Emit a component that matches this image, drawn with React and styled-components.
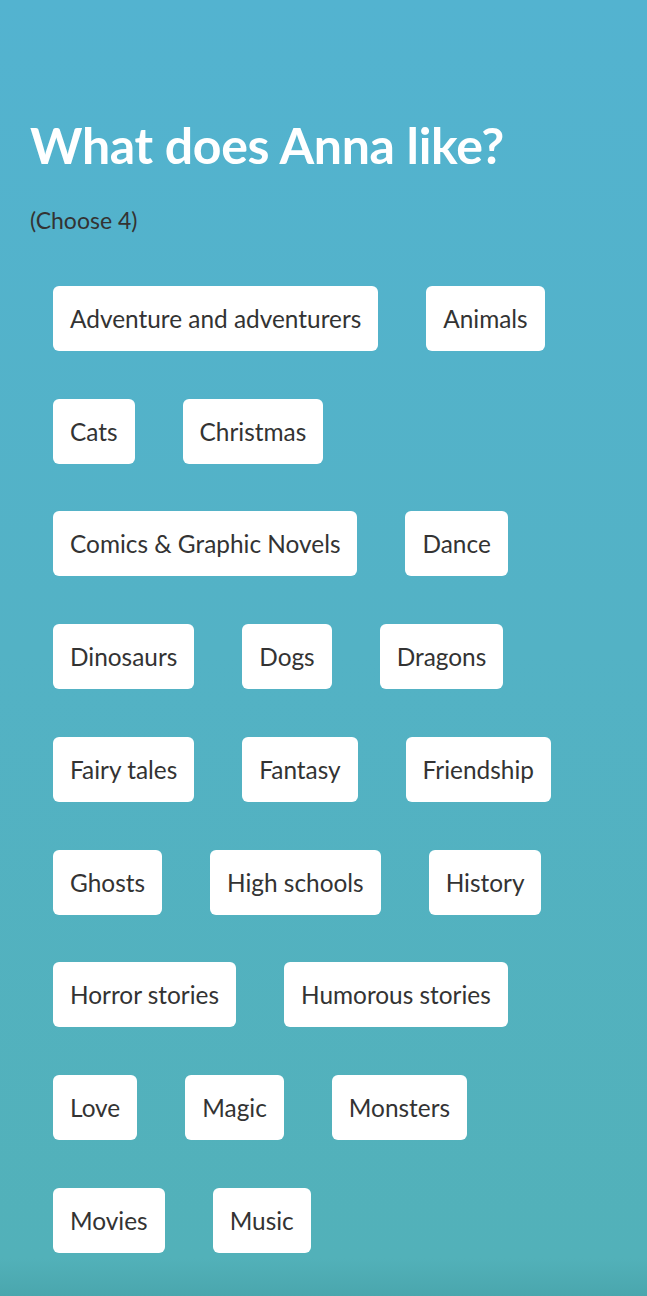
import React, { useState } from 'react';
import styled, { createGlobalStyle } from 'styled-components';

const GlobalStyle = createGlobalStyle`
    html, body {
        margin: 0;
        padding: 0;
    }
    body {
        font-family: Lato, "Liberation Sans", sans-serif;
        background: #52b2c6;
    }
`;

const interests = [
    'Adventure and adventurers', 'Animals', 'Cats', 'Christmas',
    'Comics & Graphic Novels', 'Dance', 'Dinosaurs', 'Dogs', 'Dragons',
    'Fairy tales', 'Fantasy', 'Friendship', 'Ghosts', 'High schools',
    'History', 'Horror stories', 'Humorous stories', 'Love', 'Magic',
    'Monsters', 'Movies', 'Music'
];

//#region STYLES
const StyledPage = styled.main`
    min-height: 100vh;
    box-sizing: border-box;
    padding: 115px 30px 20px 30px;
    background: linear-gradient(180deg, #53b3d0 0%, #53b2c5 50%, #52b1b9 97%, #4aa6ad 100%);
`;

const StyledTitle = styled.h1`
    margin: 0;
    color: #fff;
    font-size: 50px;
    font-weight: 700;
    line-height: 60px;
    letter-spacing: -0.3px;
`;

const StyledHint = styled.p`
    margin: 31px 0 0 0;
    color: #333;
    font-size: 23px;
    line-height: 28px;
`;

const StyledList = styled.ul`
    list-style: none;
    margin: 0;
    padding: 28px 0 0 0;
    margin-left: -1px;
    display: flex;
    flex-wrap: wrap;
`;

const StyledChip = styled.li`
    margin: 23.875px 24px;
    height: 65px;
    padding: 0 17px;
    display: flex;
    align-items: center;
    box-sizing: border-box;
    background-color: ${props => props.selected ? '#ffd95a' : '#fff'};
    border-radius: 6px;
    color: #333;
    font-size: 24.4px;
    cursor: pointer;
`;
//#endregion

function App () {
    const [picked, setPicked] = useState([]);

    const toggle = (name) => {
        setPicked(picked.includes(name)
            ? picked.filter(p => p !== name)
            : [...picked, name].slice(-4));
    };

    return (
        <StyledPage>
            <GlobalStyle />
            <StyledTitle>What does Anna like?</StyledTitle>
            <StyledHint>(Choose 4)</StyledHint>
            <StyledList>
                {interests.map(name => (
                    <StyledChip key={name}
                        selected={picked.includes(name)}
                        onClick={() => toggle(name)}
                    >{name}</StyledChip>
                ))}
            </StyledList>
        </StyledPage>
    );
}

export default App;
